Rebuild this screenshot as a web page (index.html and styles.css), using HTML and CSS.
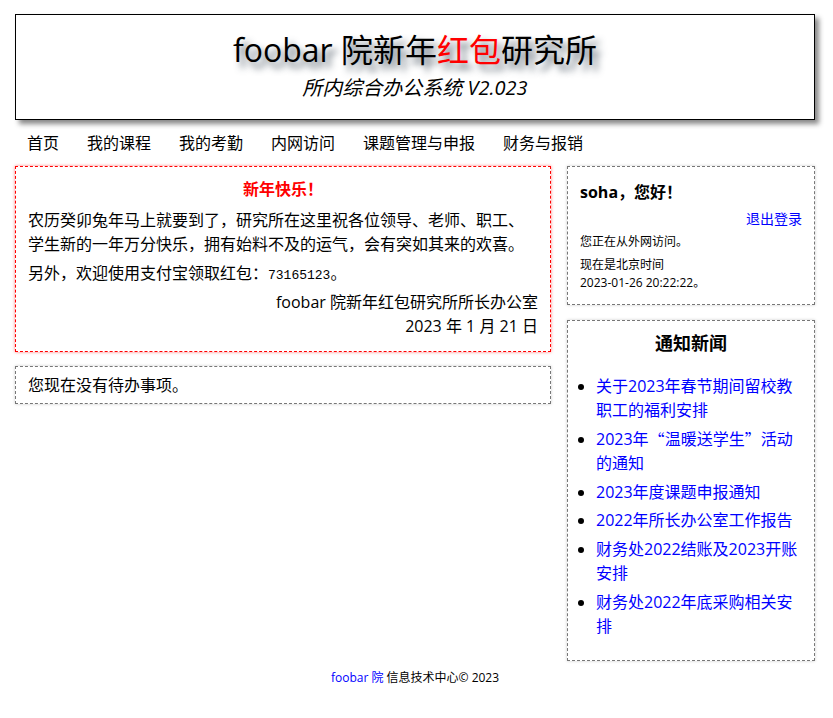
FILE: index.html
```html
<!DOCTYPE html>
<html lang="zh-CN">
<head>
<meta charset="utf-8">
<title>foobar 院新年红包研究所</title>
<link rel="stylesheet" href="styles.css">
</head>
<body>
<div class="page">
  <header class="masthead">
    <h1 class="site-title">foobar 院新年<span class="red">红包</span>研究所</h1>
    <p class="site-sub">所内综合办公系统 V2.023</p>
  </header>
  <nav class="nav">
    <a href="#">首页</a>
    <a href="#">我的课程</a>
    <a href="#">我的考勤</a>
    <a href="#">内网访问</a>
    <a href="#">课题管理与申报</a>
    <a href="#">财务与报销</a>
  </nav>
  <div class="main">
    <div class="left">
      <section class="box box-red">
        <h2 class="greet-title">新年快乐！</h2>
        <p class="para">农历癸卯兔年马上就要到了，研究所在这里祝各位领导、老师、职工、学生新的一年万分快乐，拥有始料不及的运气，会有突如其来的欢喜。</p>
        <p class="para">另外，欢迎使用支付宝领取红包：<code class="code">73165123</code>。</p>
        <p class="sign">foobar 院新年红包研究所所长办公室<br>2023 年 1 月 21 日</p>
      </section>
      <section class="box box-todo">
        <p class="todo">您现在没有待办事项。</p>
      </section>
    </div>
    <aside class="right">
      <section class="box box-user">
        <h3 class="hello">soha，您好！</h3>
        <p class="logout"><a href="#">退出登录</a></p>
        <p class="small">您正在从外网访问。</p>
        <p class="small">现在是北京时间<br>2023-01-26 20:22:22。</p>
      </section>
      <section class="box box-news">
        <h3 class="news-title">通知新闻</h3>
        <ul class="news">
          <li><a href="#">关于2023年春节期间留校教职工的福利安排</a></li>
          <li><a href="#">2023年<span class="cjk">“</span>温暖送学生<span class="cjk">”</span>活动的通知</a></li>
          <li><a href="#">2023年度课题申报通知</a></li>
          <li><a href="#">2022年所长办公室工作报告</a></li>
          <li><a href="#">财务处2022结账及2023开账安排</a></li>
          <li><a href="#">财务处2022年底采购相关安排</a></li>
        </ul>
      </section>
    </aside>
  </div>
  <footer class="footer"><a href="#">foobar 院</a> 信息技术中心© 2023</footer>
</div>
</body>
</html>
```
FILE: styles.css
```css
html, body {
  margin: 0;
  padding: 0;
  background: #fff;
}
body {
  font-family: "Open Sans", "Noto Sans CJK SC", sans-serif;
  color: #000;
  font-size: 16px;
}
.page {
  width: 800px;
  margin: 14px 0 0 15px;
}
.masthead {
  border: 1px solid #000;
  box-shadow: 4px 4px 5px #888;
  padding: 15px 0 17px;
  text-align: center;
}
.site-title {
  margin: 0;
  font-size: 32px;
  line-height: 40px;
  font-weight: normal;
  text-shadow: 5px 6px 7px rgba(40, 55, 70, 0.75);
}
.red { color: #f00; }
.site-sub {
  margin: 4px 0 0;
  font-size: 20px;
  line-height: 28px;
  font-style: italic;
}
.nav {
  display: flex;
  gap: 28px;
  padding: 0 0 0 12px;
  margin: 11px 0 11px;
  line-height: 24px;
}
.nav a {
  color: #000;
  text-decoration: none;
  font-size: 16px;
}
.main {
  display: flex;
  gap: 16px;
  align-items: flex-start;
}
.left { width: 536px; }
.right { width: 248px; }
.box {
  border: 1px dashed #777;
  box-shadow: 0 0 3px #ccc;
  padding: 0 12px;
}
.box-red {
  border-color: #f00;
  box-shadow: 0 0 3px rgba(255, 0, 0, 0.5);
  padding: 10px 12px 13px;
  margin-bottom: 14px;
}
.greet-title {
  margin: 0 0 7px;
  text-align: center;
  color: #f00;
  font-size: 16px;
  line-height: 24px;
  font-weight: bold;
}
.para {
  margin: 0 0 5px;
  line-height: 24px;
}
.code {
  font-family: "Liberation Mono", monospace;
  font-size: 13px;
  line-height: 0;
}
.sign {
  margin: 0;
  text-align: right;
  line-height: 24px;
}
.box-todo {
  padding: 6px 12px;
}
.todo {
  margin: 0;
  line-height: 24px;
}
.box-user {
  padding: 12px 12px 12px;
  margin-bottom: 15px;
}
.hello {
  margin: 0;
  font-size: 16px;
  line-height: 26px;
  font-weight: bold;
}
.logout {
  margin: 4px 0 4px;
  text-align: right;
  font-size: 14px;
  line-height: 20px;
}
.logout a, .news a, .footer a {
  color: #00f;
  text-decoration: none;
}
.small {
  margin: 0 0 5px;
  font-size: 12px;
  line-height: 18px;
}
.small:last-child { margin-bottom: 0; }
.box-news {
  padding: 12px 12px 12px;
}
.news-title {
  margin: 0;
  text-align: center;
  font-size: 18px;
  line-height: 21px;
  font-weight: bold;
}
.news {
  margin: 20px 0 10px;
  padding-left: 16px;
}
.news li {
  line-height: 24px;
  margin-bottom: 4.8px;
}
.cjk {
  font-family: "Noto Sans CJK SC", sans-serif;
  line-height: 24px;
  vertical-align: top;
}
.footer {
  text-align: center;
  font-size: 12px;
  line-height: 18px;
  margin-top: 8px;
  padding-bottom: 20px;
}
```
